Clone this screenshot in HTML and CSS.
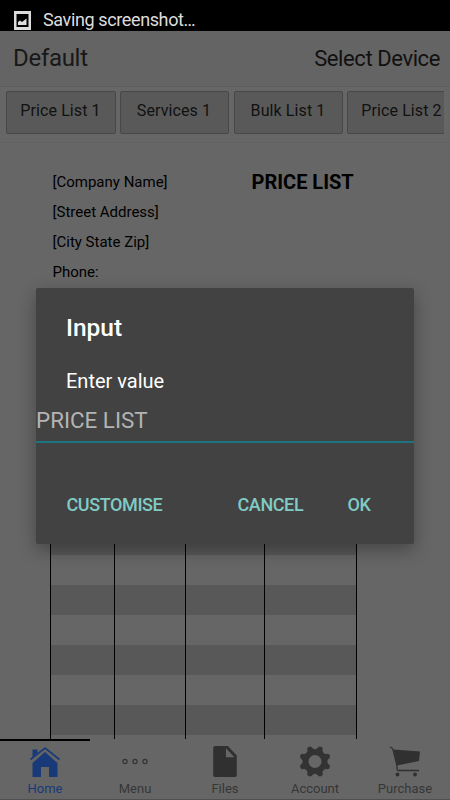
FILE: index.html
```html
<!DOCTYPE html>
<html lang="en">
<head>
<meta charset="utf-8">
<title>Price List</title>
<link rel="stylesheet" href="styles.css">
</head>
<body>
<div class="app">
  <div class="status">
    <svg width="17" height="19" viewBox="0 0 17 19"><path fill="#ddd" fill-rule="evenodd" d="M0 0h17v19H0zM2.500 3v13h12V3z"/><path fill="#ddd" d="M4 14v-3l2-1.500 2 1.500 4.500-3.500V14z"/></svg>
    <span>Saving screenshot…</span>
  </div>
  <header class="header"><span class="title">Default</span><span class="device">Select Device</span></header>
  <nav class="tabs">
    <button class="tab t1">Price List 1</button>
    <button class="tab t2">Services 1</button>
    <button class="tab t3">Bulk List 1</button>
    <button class="tab t4">Price List 2</button>
  </nav>
  <main class="sheet">
    <div class="intro">
      <div class="company">
        <div>[Company Name]</div><div>[Street Address]</div><div>[City State Zip]</div><div>Phone:</div>
      </div>
      <h1>PRICE LIST</h1>
    </div>
    <div class="grid"><i></i><i></i><i></i><i></i></div>
  </main>
  <footer class="bottom">
    <div class="item active">
      <svg width="32" height="32" viewBox="0 0 32 32"><path fill="#183a78" d="M3.500 17 16 6l12.500 11v14H20V21h-8v10H3.500zM3.500 3.500h5v5l-5 4z"/><path fill="none" stroke="#666" stroke-width="3" d="M1.500 14.500 16 3l14.500 11.500"/><path fill="none" stroke="#183a78" stroke-width="1.600" d="M1.500 13.500 16 2l14.500 11.500"/></svg>
      <span>Home</span>
    </div>
    <div class="item">
      <svg width="32" height="32" viewBox="0 0 32 32"><g fill="none" stroke="#333" stroke-width="1.200"><circle cx="6" cy="15.500" r="2.100"/><circle cx="16" cy="15.500" r="2.100"/><circle cx="26" cy="15.500" r="2.100"/></g></svg>
      <span>Menu</span>
    </div>
    <div class="item">
      <svg width="32" height="34" viewBox="0 0 32 34"><path fill="#303030" fill-rule="evenodd" d="M5.500 0H19l9.500 10v21a2 2 0 0 1-2 2h-21a2 2 0 0 1-2-2V2a2 2 0 0 1 2-2zM17 2.500V12h9z"/></svg>
      <span>Files</span>
    </div>
    <div class="item">
      <svg width="32" height="32" viewBox="-16 -15.500 32 32"><path fill="#333" fill-rule="evenodd" d="M-7-14.200Q-4-16-2.300-13.200Q0-11.500 2.300-13.200Q4-16 7-14.200Q8.500-13 7.300-11Q8-8 11-7.300Q13-8.500 14.200-7Q16-4 13.200-2.300Q11.500 0 13.200 2.300Q16 4 14.200 7Q13 8.500 11 7.300Q8 8 7.300 11Q8.500 13 7 14.200Q4 16 2.300 13.200Q0 11.500-2.300 13.200Q-4 16-7 14.200Q-8.500 13-7.300 11Q-8 8-11 7.300Q-13 8.500-14.200 7Q-16 4-13.200 2.300Q-11.500 0-13.200-2.300Q-16-4-14.200-7Q-13-8.500-11-7.300Q-8-8-7.300-11Q-8.500-13-7-14.200zM0-6.500a6.500 6.500 0 1 0 0 13a6.500 6.500 0 1 0 0-13z"/></svg>
      <span>Account</span>
    </div>
    <div class="item">
      <svg width="32" height="32" viewBox="0 0 32 32"><path fill="#303030" d="m4.500 3.500 26.500 2-1 9.500L8 19.500z"/><path fill="none" stroke="#303030" stroke-width="1.300" d="M1 1.500q2-.5 3 2L8 20v3q0 1.500 1.500 1.500H30"/><circle cx="8.500" cy="28.500" r="1.900" fill="#303030"/><circle cx="26" cy="28.500" r="1.900" fill="#303030"/></svg>
      <span>Purchase</span>
    </div>
  </footer>
  <section class="dialog" role="dialog">
    <h2>Input</h2>
    <p>Enter value</p>
    <div class="field"><span>PRICE LIST</span></div>
    <div class="actions"><span class="customise">CUSTOMISE</span><span class="cancel">CANCEL</span><span>OK</span></div>
  </section>
</div>
</body>
</html>
```
FILE: styles.css
```css
* { box-sizing: border-box; }
body { margin: 0; font-family: Roboto, "Liberation Sans", sans-serif; color: #000; }
.app { position: relative; width: 450px; height: 800px; overflow: hidden; background: #666; display: flex; flex-direction: column; }
.status { height: 31px; flex: none; background: #000; color: #ddd; display: flex; padding: 11px 14px 0; gap: 12px; font-size: 18px; line-height: 18px; letter-spacing: -.38px; }
.status svg { flex: none; }
.header { height: 56px; flex: none; background: #646464; border-bottom: 1px solid #5c5c5c; display: flex; justify-content: space-between; padding: 0 10px 0 13px; line-height: 55px; }
.title { font-size: 24px; letter-spacing: -.3px; color: #181818; }
.device { font-size: 22px; letter-spacing: -.4px; color: #111; }
.tabs { height: 55px; flex: none; display: flex; gap: 4px; margin-right: 6px; padding: 4px 0 0 6px; overflow: hidden; }
.tab { flex: none; height: 43px; padding: 0 1px 3px 0; border: 1px solid #484848; border-radius: 2px; background: #595959; color: #111; font: 16px/38px Roboto, sans-serif; letter-spacing: .1px; }
.t1, .t4 { width: 110px; }
.t2, .t3 { width: 109px; }
.t3 { margin-left: 1px; }
.sheet { flex: 1; min-height: 0; display: flex; flex-direction: column; border-top: 1px solid #626262; }
.intro { height: 202px; flex: none; display: flex; padding: 24px 0 0 52.5px; }
.company { width: 199px; font-size: 15px; line-height: 30px; }
h1 { margin: 0; font-size: 20px; line-height: 31px; font-weight: 700; }
.grid { width: 307px; flex: 1; margin-left: 50px; display: grid; grid-template-columns: 64px 71px 79px 93px; border-right: 1px solid #000; background: repeating-linear-gradient(#585858 0 30px, #666 30px 60px); }
.grid i { border-left: 1px solid #000; }
.bottom { height: 61px; flex: none; display: flex; border-bottom: 1px solid #505050; }
.item { width: 90px; display: flex; flex-direction: column; align-items: center; padding-top: 5px; border-top: 2px solid transparent; color: #363636; font-size: 13px; line-height: 16px; }
.item svg { height: 32px; flex: none; margin-bottom: 3px; }
.active { border-color: #000; color: #183a78; }
.dialog { position: absolute; left: 36px; top: 288px; width: 378px; height: 256px; background: #424242; border-radius: 2px; box-shadow: 0 6px 18px rgba(0,0,0,.32); color: #fff; }
h2 { margin: 24px 30px 0; font-size: 24.5px; line-height: 32px; font-weight: 500; }
p { margin: 24px 30px 0; font-size: 20px; line-height: 26px; }
.field { height: 37px; margin-top: 12px; border-bottom: 2px solid #1c7481; color: #b4b4b4; font-size: 22.4px; line-height: 28px; }
.actions { display: flex; margin: 49px 30px 0 30.5px; color: #80cbc4; font-size: 18px; letter-spacing: -.4px; line-height: 26px; font-weight: 500; }
.customise { width: 171px; }
.cancel { width: 110px; }
```
